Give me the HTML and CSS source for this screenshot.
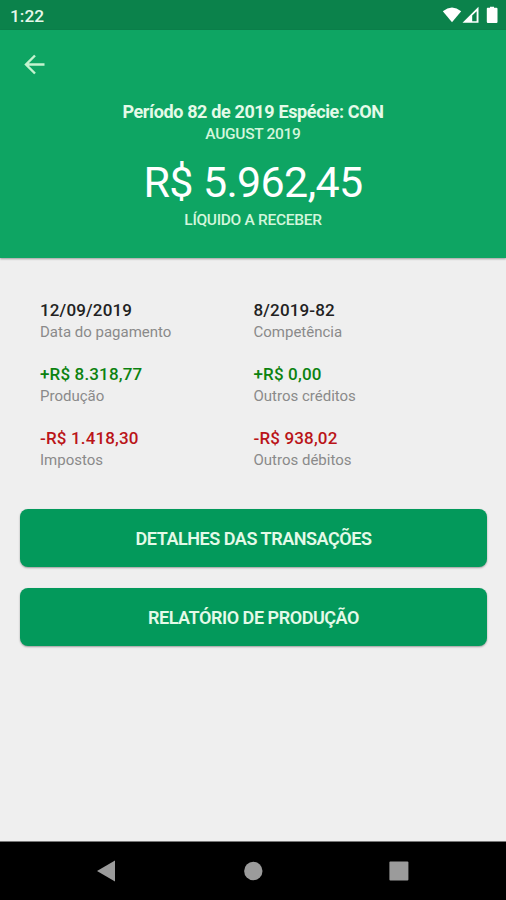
FILE: index.html
```html
<!DOCTYPE html>
<html lang="pt-BR">
<head>
  <meta charset="UTF-8">
  <meta name="viewport" content="width=device-width, initial-scale=1.0">
  <title>Demonstrativo</title>
  <link rel="stylesheet" href="styles.css">
</head>
<body>
  <div class="screen">
    <!-- Status bar -->
    <div class="status-bar">
      <span class="clock">1:22</span>
      <svg class="status-icons" width="56" height="20" viewBox="0 0 56 20">
        <path d="M0.8 5.2Q10 -2.2 19.2 5.2L10 16.2Z" fill="#fff"/>
        <path d="M20.5 16.8L36.5 0.8V16.8Z" fill="#fff"/>
        <path d="M30.2 9.5L34.6 5.2V15.2H30.2Z" fill="#0b824b"/>
        <path d="M45.5 1.7H48V0.7H52V1.7H54.5Q55.5 1.7 55.5 2.9V15.8Q55.5 17 54.5 17H45.9Q44.8 17 44.8 15.8V2.9Q44.8 1.7 45.5 1.7Z" fill="#fff"/>
      </svg>
    </div>

    <!-- Summary -->
    <header class="header">
      <button class="back" aria-label="Voltar">
        <svg width="22" height="22" viewBox="0 0 22 22">
          <path d="M20.5 10.5H2.5M11 1.5L2 10.5L11 19.5" fill="none" stroke="#c4f3cf" stroke-width="2.4"/>
        </svg>
      </button>
      <h1 class="title">Período 82 de 2019 Espécie: CON</h1>
      <div class="month">AUGUST 2019</div>
      <div class="amount">R$ 5.962,45</div>
      <div class="caption">LÍQUIDO A RECEBER</div>
    </header>

    <!-- Values -->
    <main class="content">
      <div class="grid">
        <div class="item">
          <div class="value">12/09/2019</div>
          <div class="label">Data do pagamento</div>
        </div>
        <div class="item">
          <div class="value">8/2019-82</div>
          <div class="label">Competência</div>
        </div>
        <div class="item">
          <div class="value credit">+R$ 8.318,77</div>
          <div class="label">Produção</div>
        </div>
        <div class="item">
          <div class="value credit">+R$ 0,00</div>
          <div class="label">Outros créditos</div>
        </div>
        <div class="item">
          <div class="value debit">-R$ 1.418,30</div>
          <div class="label">Impostos</div>
        </div>
        <div class="item">
          <div class="value debit">-R$ 938,02</div>
          <div class="label">Outros débitos</div>
        </div>
      </div>

      <button class="btn">DETALHES DAS TRANSAÇÕES</button>
      <button class="btn">RELATÓRIO DE PRODUÇÃO</button>
    </main>

    <!-- Navigation bar -->
    <nav class="nav-bar">
      <svg width="22" height="22" viewBox="0 0 22 22"><path d="M2 11L20 0.6V21.4Z" fill="#9b9b9b"/></svg>
      <svg width="22" height="22" viewBox="0 0 22 22"><circle cx="11.3" cy="11" r="9.2" fill="#9b9b9b"/></svg>
      <svg width="22" height="22" viewBox="0 0 22 22"><rect x="1.4" y="1.6" width="19" height="19" rx="1" fill="#9b9b9b"/></svg>
    </nav>
  </div>
</body>
</html>
```
FILE: styles.css
```css
* {
  box-sizing: border-box;
}

body {
  margin: 0;
  font-family: Roboto, 'Liberation Sans', sans-serif;
  background-color: #efefef;
}

.screen {
  display: flex;
  flex-direction: column;
  height: 900px;
  overflow: hidden;
}

/* Status bar */
.status-bar {
  display: flex;
  justify-content: space-between;
  align-items: flex-start;
  height: 30px;
  padding: 6px 8px 0 10px;
  background-color: #0b824b;
}

.clock {
  font-size: 17.3px;
  line-height: 20px;
  font-weight: 500;
  color: #e6f8ea;
}

/* Header */
.header {
  display: flex;
  flex-direction: column;
  align-items: center;
  height: 228px;
  padding-top: 24px;
  color: #fff;
  background-color: #0ea563;
  box-shadow: 0 1px 2px rgba(0, 0, 0, 0.35);
}

.back {
  align-self: flex-start;
  height: 22px;
  margin-left: 24px;
  padding: 0;
  border: none;
  background: none;
}

.back svg,
.nav-bar svg {
  display: block;
}

.title {
  margin: 25px 0 0;
  font-size: 18px;
  line-height: 22px;
  font-weight: 700;
  letter-spacing: -0.36px;
  color: #e4fae8;
}

.month,
.caption {
  font-size: 15.5px;
  line-height: 20px;
  font-weight: 500;
  letter-spacing: -0.3px;
  color: #d3f6dc;
}

.month {
  margin-top: 1px;
}

.amount {
  margin-top: 13px;
  font-size: 43px;
  line-height: 50px;
  letter-spacing: -0.65px;
}

.caption {
  margin-top: 3px;
}

/* Content */
.content {
  flex: 1;
  padding: 41px 19px 0 20px;
}

.grid {
  display: grid;
  grid-template-columns: 213.5px 1fr;
  row-gap: 20px;
  padding-left: 20px;
  margin-bottom: 38px;
}

.value {
  font-size: 17px;
  line-height: 22px;
  font-weight: 500;
  letter-spacing: 0.15px;
  color: #222;
}

.credit {
  color: #0c820f;
}

.debit {
  color: #ba1418;
}

.label {
  font-size: 15px;
  line-height: 22px;
  color: #8a8a8a;
}

.btn {
  display: block;
  width: 100%;
  height: 58px;
  margin-bottom: 21px;
  padding: 0;
  border: none;
  border-radius: 8px;
  background-color: #03995b;
  color: #e4fae8;
  font-family: inherit;
  font-size: 18px;
  font-weight: 600;
  letter-spacing: -0.45px;
  box-shadow: 0 1px 2px rgba(0, 0, 0, 0.35);
}

/* Navigation bar */
.nav-bar {
  display: flex;
  justify-content: space-between;
  align-items: center;
  height: 59px;
  padding: 0 96px 0 95px;
  border-top: 1px solid #777;
  background-color: #000;
}
```
